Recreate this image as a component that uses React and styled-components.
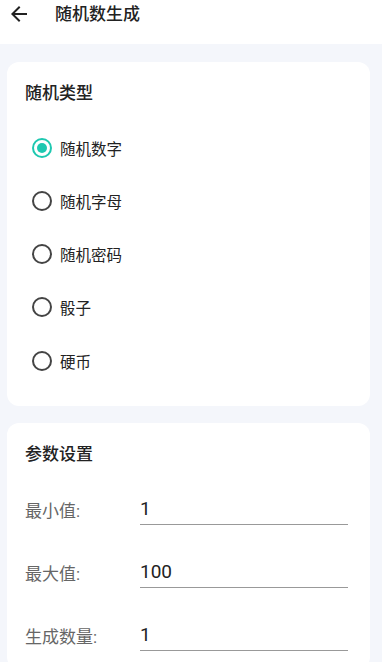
import React, { useState } from 'react';
import styled, { createGlobalStyle } from 'styled-components';

const GlobalStyle = createGlobalStyle`
  html, body {
    margin: 0;
    padding: 0;
    background: #f4f6fb;
    font-family: Roboto, "Noto Sans CJK SC", sans-serif;
    color: #222;
  }
`;

const Header = styled.div`
  height: 44px;
  background: #fff;
  display: flex;
  align-items: flex-start;
  padding: 2px 0 0 7px;
  box-sizing: border-box;
  gap: 24px;
`;

const BackIcon = styled.svg`
  width: 24px;
  height: 24px;
  fill: #222;
  flex-shrink: 0;
`;

const HeaderTitle = styled.div`
  font-size: 17px;
  line-height: 24px;
  font-weight: 500;
  color: #222;
`;

const Body = styled.div`
  padding: 18px 12px 0 7px;
  display: flex;
  flex-direction: column;
  gap: 17px;
`;

const Card = styled.div`
  background: #fff;
  border-radius: 12px;
  padding: ${p => (p.$tight ? '19px 22px 18px 18px' : '19px 18px 19px 18px')};
`;

const CardTitle = styled.div`
  font-size: 17px;
  line-height: 24px;
  font-weight: 500;
  color: #222;
`;

const RadioList = styled.div`
  margin-top: 16px;
  display: flex;
  flex-direction: column;
`;

const RadioRow = styled.label`
  height: 53.25px;
  display: flex;
  align-items: center;
  padding-left: 7px;
  gap: 8px;
  cursor: pointer;
`;

const Circle = styled.span`
  width: 20px;
  height: 20px;
  box-sizing: border-box;
  border-radius: 50%;
  border: 2px solid ${p => (p.$on ? '#1ec8b0' : '#444')};
  display: flex;
  align-items: center;
  justify-content: center;

  &::after {
    content: '';
    width: 10px;
    height: 10px;
    border-radius: 50%;
    background: ${p => (p.$on ? '#1ec8b0' : 'transparent')};
  }
`;

const RadioLabel = styled.span`
  font-size: 15.5px;
  color: #222;
`;

const FieldList = styled.div`
  margin-top: 27px;
  display: flex;
  flex-direction: column;
  gap: 31px;
`;

const FieldRow = styled.div`
  display: flex;
  align-items: center;
  height: 32px;
`;

const FieldLabel = styled.div`
  width: 115px;
  flex-shrink: 0;
  font-size: 17px;
  color: #666;
`;

const Input = styled.input`
  flex: 1;
  min-width: 0;
  height: 32px;
  box-sizing: border-box;
  border: none;
  border-bottom: 1.5px solid #999;
  outline: none;
  padding: 0;
  font-family: Roboto, "Noto Sans CJK SC", sans-serif;
  font-size: 19px;
  color: #222;
  background: transparent;
`;

const types = ['随机数字', '随机字母', '随机密码', '骰子', '硬币'];

export default function App() {
  const [type, setType] = useState(0);
  const [vals, setVals] = useState({ min: '1', max: '100', count: '1' });
  const fields = [
    { key: 'min', label: '最小值:' },
    { key: 'max', label: '最大值:' },
    { key: 'count', label: '生成数量:' },
  ];

  return (
    <>
      <GlobalStyle />
      <Header>
        <BackIcon viewBox="0 0 24 24">
          <path d="M20 11H7.83l5.59-5.59L12 4l-8 8 8 8 1.41-1.41L7.83 13H20v-2z" />
        </BackIcon>
        <HeaderTitle>随机数生成</HeaderTitle>
      </Header>
      <Body>
        <Card>
          <CardTitle>随机类型</CardTitle>
          <RadioList>
            {types.map((t, i) => (
              <RadioRow key={t} onClick={() => setType(i)}>
                <Circle $on={type === i} />
                <RadioLabel>{t}</RadioLabel>
              </RadioRow>
            ))}
          </RadioList>
        </Card>
        <Card $tight>
          <CardTitle>参数设置</CardTitle>
          <FieldList>
            {fields.map(f => (
              <FieldRow key={f.key}>
                <FieldLabel>{f.label}</FieldLabel>
                <Input
                  value={vals[f.key]}
                  onChange={e => setVals({ ...vals, [f.key]: e.target.value })}
                />
              </FieldRow>
            ))}
          </FieldList>
        </Card>
      </Body>
    </>
  );
}
